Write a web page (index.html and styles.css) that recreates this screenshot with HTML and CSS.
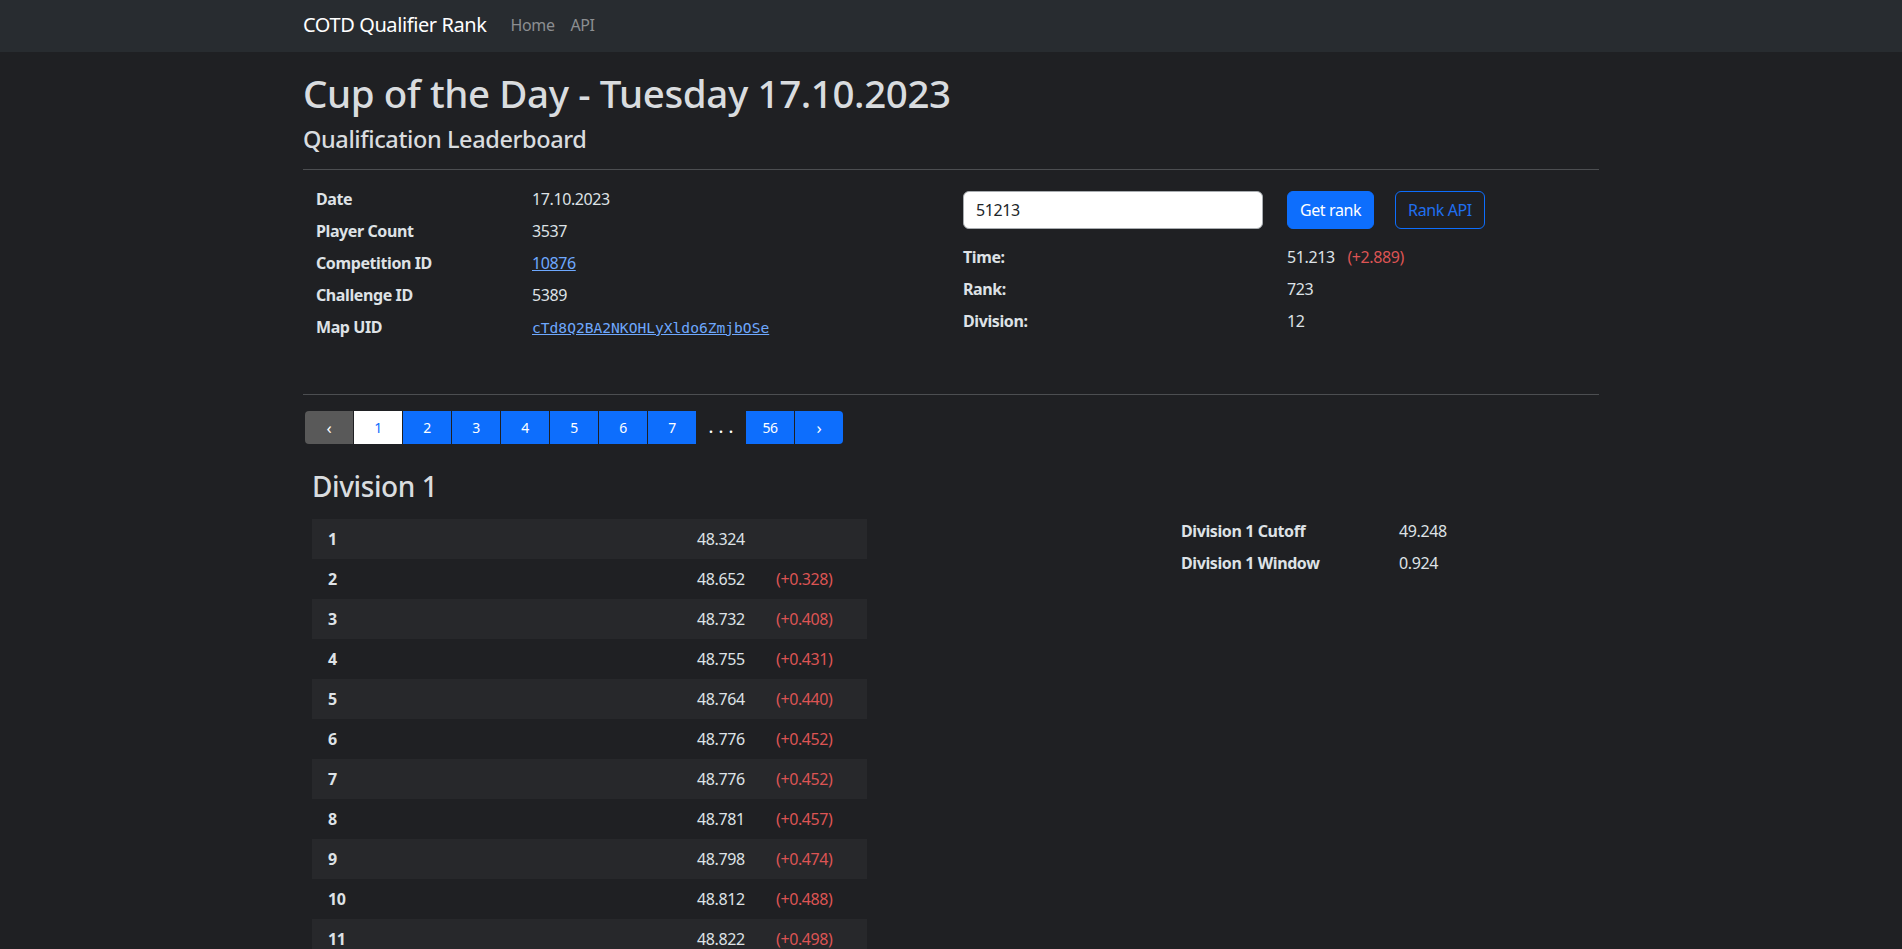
FILE: index.html
```html
<!DOCTYPE html>
<html lang="en">
<head>
<meta charset="utf-8">
<title>COTD Qualifier Rank</title>
<link rel="stylesheet" href="styles.css">
</head>
<body>
<nav class="navbar">
  <div class="nav-inner">
    <a class="brand" href="#">COTD Qualifier Rank</a>
    <a class="nav-link" href="#">Home</a>
    <a class="nav-link" href="#">API</a>
  </div>
</nav>
<main class="container">
  <h1 class="title">Cup of the Day - Tuesday 17.10.2023</h1>
  <h2 class="subtitle">Qualification Leaderboard</h2>
  <hr class="rule">
  <section class="info">
    <div class="info-left">
      <div class="kv"><span class="k">Date</span><span class="v">17.10.2023</span></div>
      <div class="kv"><span class="k">Player Count</span><span class="v">3537</span></div>
      <div class="kv"><span class="k">Competition ID</span><span class="v"><a class="link" href="#">10876</a></span></div>
      <div class="kv"><span class="k">Challenge ID</span><span class="v">5389</span></div>
      <div class="kv"><span class="k">Map UID</span><span class="v"><a class="link mono" href="#">cTd8Q2BA2NKOHLyXldo6ZmjbOSe</a></span></div>
    </div>
    <div class="info-right">
      <form class="rank-form">
        <input class="rank-input" type="text" value="51213">
        <div class="btns">
          <button class="btn btn-primary" type="button">Get rank</button>
          <button class="btn btn-outline" type="button">Rank API</button>
        </div>
      </form>
      <div class="res">
        <div class="res-row"><span class="k">Time:</span><span class="v">51.213 <span class="diff">(+2.889)</span></span></div>
        <div class="res-row"><span class="k">Rank:</span><span class="v">723</span></div>
        <div class="res-row"><span class="k">Division:</span><span class="v">12</span></div>
      </div>
    </div>
  </section>
  <hr class="rule rule2">
  <nav class="pager">
    <span class="pg pg-prev">&lsaquo;</span>
    <span class="pg pg-active">1</span>
    <span class="pg">2</span>
    <span class="pg">3</span>
    <span class="pg">4</span>
    <span class="pg">5</span>
    <span class="pg">6</span>
    <span class="pg">7</span>
    <span class="pg pg-gap">...</span>
    <span class="pg">56</span>
    <span class="pg pg-next">&rsaquo;</span>
  </nav>
  <section class="division">
    <div class="div-left">
      <h3 class="div-title">Division 1</h3>
      <div class="board">
        <div class="row"><span class="rank">1</span><span class="time">48.324</span><span class="diff"></span></div>
        <div class="row"><span class="rank">2</span><span class="time">48.652</span><span class="diff">(+0.328)</span></div>
        <div class="row"><span class="rank">3</span><span class="time">48.732</span><span class="diff">(+0.408)</span></div>
        <div class="row"><span class="rank">4</span><span class="time">48.755</span><span class="diff">(+0.431)</span></div>
        <div class="row"><span class="rank">5</span><span class="time">48.764</span><span class="diff">(+0.440)</span></div>
        <div class="row"><span class="rank">6</span><span class="time">48.776</span><span class="diff">(+0.452)</span></div>
        <div class="row"><span class="rank">7</span><span class="time">48.776</span><span class="diff">(+0.452)</span></div>
        <div class="row"><span class="rank">8</span><span class="time">48.781</span><span class="diff">(+0.457)</span></div>
        <div class="row"><span class="rank">9</span><span class="time">48.798</span><span class="diff">(+0.474)</span></div>
        <div class="row"><span class="rank">10</span><span class="time">48.812</span><span class="diff">(+0.488)</span></div>
        <div class="row"><span class="rank">11</span><span class="time">48.822</span><span class="diff">(+0.498)</span></div>
      </div>
    </div>
    <div class="div-right">
      <div class="kv2"><span class="k">Division 1 Cutoff</span><span class="v">49.248</span></div>
      <div class="kv2"><span class="k">Division 1 Window</span><span class="v">0.924</span></div>
    </div>
  </section>
</main>
</body>
</html>
```

FILE: styles.css
```css
html {
  scrollbar-width: none;
}
body {
  margin: 0;
  background: #1f2023;
  color: #dee2e6;
  font-family: "Noto Sans", "Open Sans", sans-serif;
  font-size: 16px;
  line-height: 1.5;
  letter-spacing: -0.025em;
}
a { text-decoration: none; }

.navbar {
  background: #282c30;
  height: 52px;
}
.nav-inner {
  max-width: 1296px;
  margin: 0 auto;
  height: 52px;
  display: flex;
  align-items: center;
  padding-bottom: 3px;
  box-sizing: border-box;
}
.brand {
  color: #ffffff;
  font-size: 20px;
  line-height: 30px;
  margin-right: 16px;
}
.nav-link {
  color: #8c8e91;
  padding: 0 8px;
}

.container {
  max-width: 1296px;
  margin: 0 auto;
  padding-top: 17px;
}
.title {
  font-size: 38.5px;
  font-weight: 500;
  line-height: 48px;
  margin: 0 0 8px;
  color: #d9dcdf;
}
.subtitle {
  font-size: 23.5px;
  font-weight: 500;
  line-height: 28.8px;
  margin: 0;
  color: #d9dcdf;
}
.rule {
  border: 0;
  border-top: 1px solid #4c4e51;
  margin: 15px 0 13px;
}

.info {
  display: grid;
  grid-template-columns: 1fr 1fr;
  column-gap: 24px;
}
.info-left {
  padding-left: 13px;
}
.kv {
  display: grid;
  grid-template-columns: 216px 1fr;
  padding: 4px 0;
}
.k { font-weight: 700; }
.link {
  color: #6ea8fe;
  text-decoration: underline;
}
.mono {
  font-family: "DejaVu Sans Mono", "Liberation Mono", monospace;
  font-size: 14.6px;
  letter-spacing: 0;
}

.info-right {
  padding-top: 8px;
}
.rank-form {
  display: grid;
  grid-template-columns: 300px 1fr;
  column-gap: 24px;
  margin: 0 0 12px;
}
.rank-input {
  height: 38px;
  box-sizing: border-box;
  border: 1px solid #a8acb0;
  border-radius: 6px;
  background: #ffffff;
  color: #212529;
  font-family: inherit;
  font-size: 16px;
  letter-spacing: -0.025em;
  padding: 6px 12px;
}
.btns {
  display: flex;
  gap: 21px;
}
.btn {
  height: 38px;
  box-sizing: border-box;
  border-radius: 6px;
  font-family: inherit;
  font-size: 16px;
  letter-spacing: -0.025em;
  padding: 6px 12px;
  border: 1px solid #0d6efd;
}
.btn-primary {
  background: #0d6efd;
  color: #ffffff;
}
.btn-outline {
  background: transparent;
  color: #1f6ff0;
}
.res-row {
  display: grid;
  grid-template-columns: 324px 1fr;
  padding: 4px 0;
}
.diff {
  color: #dc5454;
}
.res-row .diff {
  margin-left: 9px;
}

.rule2 {
  margin: 51px 0 16px;
}

.pager {
  display: flex;
  gap: 1px;
  margin-left: 2px;
  height: 33px;
}
.pg {
  width: 48px;
  height: 33px;
  display: flex;
  align-items: center;
  justify-content: center;
  background: #0d6efd;
  color: #ffffff;
  font-size: 14px;
}
.pg-prev {
  background: #595959;
  border-radius: 4px 0 0 4px;
  font-size: 17px;
}
.pg-next {
  border-radius: 0 4px 4px 0;
  font-size: 17px;
}
.pg-active {
  background: #ffffff;
  color: #0d6efd;
}
.pg-gap {
  background: transparent;
  font-weight: 700;
  letter-spacing: 6px;
  padding-left: 6px;
  box-sizing: border-box;
}

.division {
  display: flex;
  margin: 26px 0 0 9px;
}
.div-left {
  width: 555px;
}
.div-title {
  font-size: 28px;
  font-weight: 500;
  line-height: 1.2;
  margin: 0 0 16px;
  color: #d9dcdf;
}
.row {
  display: grid;
  grid-template-columns: 385px 79px 1fr;
  height: 40px;
  box-sizing: border-box;
  padding: 8px 0;
}
.row:nth-child(odd) {
  background: #27282b;
}
.rank {
  font-weight: 700;
  padding-left: 16px;
}
.div-right {
  margin-left: 314px;
  padding-top: 45px;
}
.kv2 {
  display: grid;
  grid-template-columns: 218px 1fr;
  padding: 4px 0;
}
```
